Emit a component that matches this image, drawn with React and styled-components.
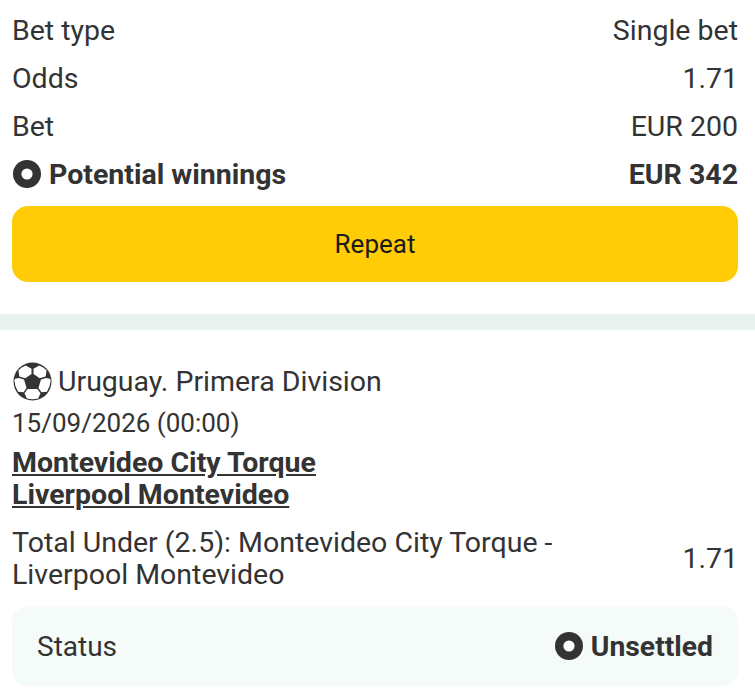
import React from 'react';
import styled, { createGlobalStyle } from 'styled-components';

const Global = createGlobalStyle`
  html, body { margin: 0; padding: 0; background: #fff; }
  body { font-family: Roboto, "Liberation Sans", sans-serif; color: #333; }
`;

const Page = styled.div`
  width: 755px;
  height: 690px;
  overflow: hidden;
  display: flex;
  flex-direction: column;
`;

const Summary = styled.section`
  height: 314px;
  padding: 6px 17px 0 12px;
  box-sizing: border-box;
`;

const Row = styled.div`
  display: flex;
  justify-content: space-between;
  align-items: center;
  height: 48px;
  font-size: 28.5px;
  font-weight: ${p => (p.$bold ? 700 : 400)};
`;

const LabelWrap = styled.span`
  display: flex;
  align-items: center;
  gap: 8px;
  padding-left: 1px;
`;

const RepeatButton = styled.button`
  display: block;
  width: 726px;
  height: 76px;
  margin-top: 8px;
  border: none;
  border-radius: 16px;
  background: #ffcc05;
  color: #1a1a1a;
  font-family: inherit;
  font-size: 26px;
`;

const Divider = styled.div`
  height: 16px;
  background: #e9f2ef;
`;

const Bet = styled.section`
  padding: 31px 17px 0 12px;
`;

const League = styled.div`
  display: flex;
  align-items: center;
  gap: 6px;
  height: 40px;
  font-size: 28.5px;
`;

const DateLine = styled.div`
  font-size: 26px;
  line-height: 32px;
  margin-top: 6px;
`;

const Teams = styled.div`
  font-size: 28.5px;
  line-height: 32px;
  font-weight: 700;
  text-decoration: underline;
  margin-top: 8px;
`;

const Outcome = styled.div`
  display: flex;
  justify-content: space-between;
  align-items: center;
  font-size: 28.5px;
  line-height: 32px;
  margin-top: 16px;
`;

const OutcomeText = styled.div`
  width: 570px;
`;

const StatusBox = styled.div`
  display: flex;
  justify-content: space-between;
  align-items: center;
  height: 80px;
  margin-top: 15px;
  padding: 0 25px;
  border-radius: 16px;
  background: #f4fbf9;
  font-size: 28px;
`;

const StatusValue = styled.span`
  display: flex;
  align-items: center;
  gap: 8px;
  font-size: 28.3px;
  font-weight: 700;
`;

const BallSlot = styled.span`
  display: flex;
  padding-left: 1px;
`;

const Dot = () => (
  <svg width="28" height="28" viewBox="0 0 28 28">
    <circle cx="14" cy="14" r="14" fill="#333" />
    <circle cx="14" cy="14" r="5.6" fill="#fff" />
  </svg>
);

// dark ball with the white panels cut out on top
const Ball = () => (
  <svg width="39" height="39" viewBox="0 0 40 40">
    <circle cx="20" cy="20" r="19.5" fill="#333" />
    <g fill="#fff">
      <path d="M13 3.5 L19 6.8 V12.3 L12.6 16.6 L6.5 14.8 L5.6 8.4 Q8.8 5 13 3.5Z" />
      <path d="M27 3.5 L21 6.8 V12.3 L27.4 16.6 L33.5 14.8 L34.4 8.4 Q31.2 5 27 3.5Z" />
      <path d="M2 17.2 L6 16.4 L11.3 18 L13.9 26.6 L10.8 31 L5.2 30.4 Q1.6 24.5 1.4 19Z" />
      <path d="M38 17.2 L34 16.4 L28.7 18 L26.1 26.6 L29.2 31 L34.8 30.4 Q38.4 24.5 38.6 19Z" />
      <path d="M15 27.8 H25 L28.2 32 L25.8 37.4 Q20 39 14.2 37.4 L11.8 32Z" />
    </g>
  </svg>
);

export default function App() {
  return (
    <Page>
      <Global />
      <Summary>
        <Row><span>Bet type</span><span>Single bet</span></Row>
        <Row><span>Odds</span><span>1.71</span></Row>
        <Row><span>Bet</span><span>EUR 200</span></Row>
        <Row $bold>
          <LabelWrap><Dot />Potential winnings</LabelWrap>
          <span>EUR 342</span>
        </Row>
        <RepeatButton>Repeat</RepeatButton>
      </Summary>
      <Divider />
      <Bet>
        <League><BallSlot><Ball /></BallSlot>Uruguay. Primera Division</League>
        <DateLine>15/09/2026 (00:00)</DateLine>
        <Teams>Montevideo City Torque<br />Liverpool Montevideo</Teams>
        <Outcome>
          <OutcomeText>Total Under (2.5): Montevideo City Torque - Liverpool Montevideo</OutcomeText>
          <span>1.71</span>
        </Outcome>
        <StatusBox>
          <span>Status</span>
          <StatusValue><Dot />Unsettled</StatusValue>
        </StatusBox>
      </Bet>
    </Page>
  );
}
